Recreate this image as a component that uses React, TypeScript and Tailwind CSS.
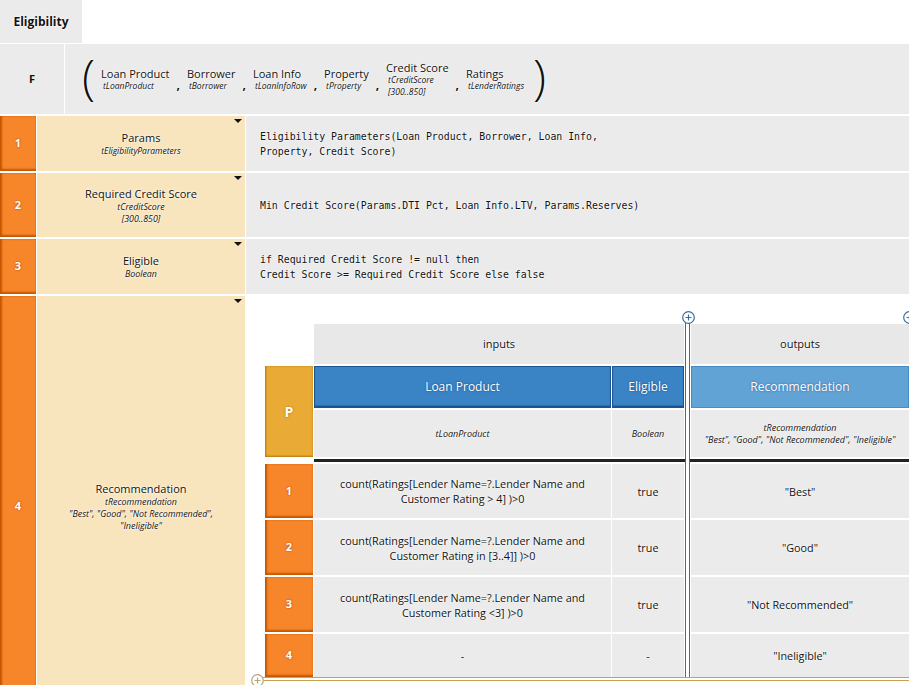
import React from "react";

const Tri = () => (
  <div className="absolute right-[3px] top-[3px] w-0 h-0 border-l-[4px] border-r-[4px] border-t-[4px] border-l-transparent border-r-transparent border-t-[#111]" />
);

const Num = ({ n }: { n: string }) => (
  <div className="w-[36px] shrink-0 bg-[#f7852a] shadow-[inset_2px_0_2px_#c65700,inset_0_-2px_2px_#c65700] flex items-center justify-center text-white font-bold text-[11px] [text-shadow:0_0_2px_#a04000]">
    {n}
  </div>
);

const Name = ({ children }: { children: React.ReactNode }) => (
  <div className="relative w-[208px] shrink-0 bg-[#f9e5bd] flex flex-col items-center justify-center text-center [text-shadow:0_0_2px_#fff,0_0_2px_#fff]">
    <Tri />
    {children}
  </div>
);

const Code = ({ children }: { children: React.ReactNode }) => (
  <div className="flex-1 bg-[#ebebeb] flex items-center pl-[14px] font-['DejaVu_Sans_Mono'] text-[9.85px] leading-[15px] text-[#111] whitespace-pre [text-shadow:0_0_2px_#fff,0_0_2px_#fff]">
    <div>{children}</div>
  </div>
);

const Param = ({ name, type }: { name: string; type: React.ReactNode }) => (
  <div className="flex flex-col">
    <div className="text-[11px] leading-[13px]">{name}</div>
    <div className="italic text-[8.5px] leading-[12px] pl-[2px]">{type}</div>
  </div>
);

const Comma = () => <div className="font-bold text-[12px] mt-[12px]">,</div>;

const Plus = ({ color, className }: { color: string; className: string }) => (
  <svg width="13" height="13" viewBox="0 0 13 13" className={className}>
    <circle cx="6.5" cy="6.5" r="5.8" fill="white" stroke={color} strokeWidth="1.2" />
    <path d="M6.5 3.5v6M3.5 6.5h6" stroke={color} strokeWidth="1.2" />
  </svg>
);

const NumCell = ({ n }: { n: string }) => (
  <div className="bg-[#f7852a] shadow-[inset_2px_0_2px_#c65700,inset_0_-2px_2px_#c65700] flex items-center justify-center text-white font-bold text-[11px] [text-shadow:0_0_2px_#a04000]">
    {n}
  </div>
);

const Cell = ({ children }: { children: React.ReactNode }) => (
  <div className="bg-[#ebebeb] flex items-center justify-center text-center text-[10.8px] leading-[15px] text-[#111] [text-shadow:0_0_2px_#fff,0_0_2px_#fff]">
    <div>{children}</div>
  </div>
);

export default function App() {
  return (
    <div className="w-[909px] h-[685px] overflow-hidden bg-white font-['Open_Sans'] text-[#111]">
      <div className="w-[82px] h-[43px] bg-[#ebebeb] flex items-center justify-center font-bold text-[12px] [text-shadow:0_0_2px_#fff,0_0_2px_#fff]">
        Eligibility
      </div>
      <div className="mt-[1px] flex h-[70px] gap-[1px]">
        <div className="w-[64px] bg-[#ebebeb] flex items-center justify-center font-bold text-[11px]">F</div>
        <div className="flex-1 bg-[#ebebeb] flex items-center pl-[17px] gap-[7px] [text-shadow:0_0_2px_#fff,0_0_2px_#fff]">
          <div className="text-[48px] font-[350] leading-none mr-[-1px] mt-[-6px]">(</div>
          <Param name="Loan Product" type="tLoanProduct" />
          <Comma />
          <Param name="Borrower" type="tBorrower" />
          <Comma />
          <Param name="Loan Info" type="tLoanInfoRow" />
          <Comma />
          <Param name="Property" type="tProperty" />
          <Comma />
          <Param
            name="Credit Score"
            type={
              <>
                tCreditScore
                <br />
                [300..850]
              </>
            }
          />
          <Comma />
          <Param name="Ratings" type="tLenderRatings" />
          <div className="text-[48px] font-[350] leading-none ml-[2px] mt-[-6px]">)</div>
        </div>
      </div>

      <div className="mt-[2px] flex flex-col gap-[2px]">
        <div className="flex h-[55px] gap-[1px]">
          <Num n="1" />
          <Name>
            <div className="text-[11px] leading-[15px]">Params</div>
            <div className="italic text-[8.5px] leading-[12px]">tEligibilityParameters</div>
          </Name>
          <Code>
            {"Eligibility Parameters(Loan Product, Borrower, Loan Info,\nProperty, Credit Score)"}
          </Code>
        </div>
        <div className="flex h-[64px] gap-[1px]">
          <Num n="2" />
          <Name>
            <div className="text-[11px] leading-[15px]">Required Credit Score</div>
            <div className="italic text-[8.8px] leading-[12px]">
              tCreditScore
              <br />
              [300..850]
            </div>
          </Name>
          <Code>{"Min Credit Score(Params.DTI Pct, Loan Info.LTV, Params.Reserves)"}</Code>
        </div>
        <div className="flex h-[55px] gap-[1px]">
          <Num n="3" />
          <Name>
            <div className="text-[11px] leading-[15px]">Eligible</div>
            <div className="italic text-[8.8px] leading-[12px]">Boolean</div>
          </Name>
          <Code>
            {"if Required Credit Score != null then\nCredit Score >= Required Credit Score else false"}
          </Code>
        </div>
        <div className="flex h-[420px] gap-[1px]">
          <Num n="4" />
          <Name>
            <div className="text-[11px] leading-[15px]">Recommendation</div>
            <div className="italic text-[8.9px] leading-[12px]">
              tRecommendation
              <br />
              "Best", "Good", "Not Recommended",
              <br />
              "Ineligible"
            </div>
          </Name>
          <div className="flex-1 bg-white pl-[19px] pt-[28px]">
            <div className="relative">
              <Plus color="#3d6d9c" className="absolute left-[417px] top-[-13px] z-10" />
              <Plus color="#3d6d9c" className="absolute left-[638px] top-[-13px] z-10" />
              <div className="grid grid-cols-[48px_297px_72px_5px_218px] grid-rows-[40px_42px_47px_3px_54px_55px_55px_43px] gap-x-[1px] gap-y-[2px]">
                <div className="col-start-1 row-start-1" />
                <div className="col-start-2 col-span-2 row-start-1 bg-[#e8e8e8] flex items-center justify-center text-[11px] [text-shadow:0_0_2px_#fff,0_0_2px_#fff]">
                  inputs
                </div>
                <div className="col-start-5 row-start-1 bg-[#e8e8e8] flex items-center justify-center text-[11px] [text-shadow:0_0_2px_#fff,0_0_2px_#fff]">
                  outputs
                </div>

                <div className="col-start-1 row-start-2 row-span-2 bg-[#e9aa36] shadow-[inset_1px_0_2px_#b97d10,inset_0_-1px_2px_#b97d10] flex items-center justify-center text-white font-bold text-[14px] [text-shadow:0_0_2px_#a06a00]">
                  P
                </div>
                <div className="col-start-2 row-start-2 bg-[#3a84c6] shadow-[inset_0_0_0_1px_#1a5596,inset_0_-2px_2px_#0d3f7a] flex items-center justify-center text-white text-[12px] font-medium [text-shadow:0_0_2px_#0d3f7a]">
                  Loan Product
                </div>
                <div className="col-start-3 row-start-2 bg-[#3a84c6] shadow-[inset_0_0_0_1px_#1a5596,inset_0_-2px_2px_#0d3f7a] flex items-center justify-center text-white text-[12px] font-medium [text-shadow:0_0_2px_#0d3f7a]">
                  Eligible
                </div>
                <div className="col-start-5 row-start-2 bg-[#62a3d6] shadow-[inset_0_0_0_1px_#4a8dc4] flex items-center justify-center text-white text-[12px] font-medium [text-shadow:0_0_2px_#1d5a96]">
                  Recommendation
                </div>

                <div className="col-start-2 row-start-3 bg-[#ebebeb] flex items-center justify-center italic text-[9px] [text-shadow:0_0_2px_#fff,0_0_2px_#fff]">
                  tLoanProduct
                </div>
                <div className="col-start-3 row-start-3 bg-[#ebebeb] flex items-center justify-center italic text-[9px] [text-shadow:0_0_2px_#fff,0_0_2px_#fff]">
                  Boolean
                </div>
                <div className="col-start-5 row-start-3 bg-[#ebebeb] flex items-center justify-center text-center italic text-[9px] leading-[12px] [text-shadow:0_0_2px_#fff,0_0_2px_#fff]">
                  <div>
                    tRecommendation
                    <br />
                    "Best", "Good", "Not Recommended", "Ineligible"
                  </div>
                </div>

                <div className="col-start-1 row-start-4" />
                <div className="col-start-2 col-span-4 row-start-4 bg-[#222]" />

                <NumCell n="1" />
                <Cell>
                  count(Ratings[Lender Name=?.Lender Name and
                  <br />
                  Customer Rating &gt; 4] )&gt;0
                </Cell>
                <Cell>true</Cell>
                <Cell>"Best"</Cell>

                <NumCell n="2" />
                <Cell>
                  count(Ratings[Lender Name=?.Lender Name and
                  <br />
                  Customer Rating in [3..4]] )&gt;0
                </Cell>
                <Cell>true</Cell>
                <Cell>"Good"</Cell>

                <NumCell n="3" />
                <Cell>
                  count(Ratings[Lender Name=?.Lender Name and
                  <br />
                  Customer Rating &lt;3] )&gt;0
                </Cell>
                <Cell>true</Cell>
                <Cell>"Not Recommended"</Cell>

                <NumCell n="4" />
                <Cell>-</Cell>
                <Cell>-</Cell>
                <Cell>"Ineligible"</Cell>

                <div className="col-start-4 row-start-1 row-span-8 mt-[-4px] border-x-[1.5px] border-[#3d6d9c] bg-white" />
              </div>
              <div className="relative ml-[-3px] h-[4px] border-y border-[#c9a24f]">
                <Plus color="#b8a47a" className="absolute left-[-11px] top-[-4px]" />
              </div>
            </div>
          </div>
        </div>
      </div>
    </div>
  );
}
